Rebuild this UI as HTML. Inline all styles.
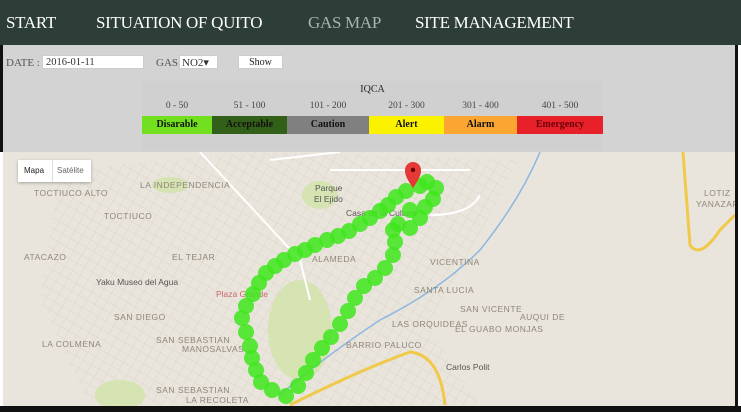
<!DOCTYPE html>
<html><head><meta charset="utf-8"><style>
*{margin:0;padding:0;box-sizing:border-box}
body{width:741px;height:412px;overflow:hidden;background:#fff;font-family:"Liberation Serif",serif;position:relative}
.nav{position:absolute;left:0;top:0;width:741px;height:45px;background:#2d3d38;color:#fff;font-size:17px}
.nav span{position:absolute;top:13px;letter-spacing:-0.3px}
.gray{position:absolute;left:0;top:45px;width:738px;height:107px;background:#d3d3d3;border-left:3px solid #111;border-right:3px solid #111}
.f{position:absolute;font-size:11px;color:#555;top:57px}
.in{position:absolute;background:#fff;height:14px;top:55px;font-size:10.5px;color:#333;padding:1px 3px;border:1px solid #ccc}
.tbl{position:absolute;left:142px;top:81px;width:461px;height:70px;background:#d0d0d0}
.cell{position:absolute;top:35px;height:18px;text-align:center;font-size:10px;font-weight:bold;line-height:18px;color:#111}
.num{position:absolute;top:20px;text-align:center;font-size:9.5px;color:#444}
.map{position:absolute;left:3px;top:152px;width:732px;height:254px;background:#e9e5dc;overflow:hidden}
.bot{position:absolute;left:0;top:406px;width:741px;height:6px;background:#111}
.rb{position:absolute;left:735px;top:45px;width:3px;height:367px;background:#111}
</style></head><body>
<div class="nav">
<span style="left:6px">START</span>
<span style="left:96px">SITUATION OF QUITO</span>
<span style="left:308px;color:#a9b2ae">GAS MAP</span>
<span style="left:415px">SITE MANAGEMENT</span>
</div>
<div class="gray"></div>
<div class="f" style="left:6px">DATE :</div>
<div class="in" style="left:42px;width:102px">2016-01-11</div>
<div class="f" style="left:156px">GAS:</div>
<div class="in" style="left:179px;width:39px;font-size:11px;padding:0 2px">NO2▾</div>
<div class="in" style="left:238px;width:45px;text-align:center;font-size:10px;color:#222">Show</div>
<div class="tbl">
<div style="position:absolute;left:0;top:3px;width:461px;text-align:center;font-size:10px;color:#222">IQCA</div>
<div class="num" style="left:0;width:70px">0 - 50</div>
<div class="num" style="left:70px;width:75px">51 - 100</div>
<div class="num" style="left:145px;width:82px">101 - 200</div>
<div class="num" style="left:227px;width:75px">201 - 300</div>
<div class="num" style="left:302px;width:73px">301 - 400</div>
<div class="num" style="left:375px;width:86px">401 - 500</div>
<div class="cell" style="left:0;width:70px;background:#72e01e">Disarable</div>
<div class="cell" style="left:70px;width:75px;background:#336018">Acceptable</div>
<div class="cell" style="left:145px;width:82px;background:#808080">Caution</div>
<div class="cell" style="left:227px;width:75px;background:#fbf200">Alert</div>
<div class="cell" style="left:302px;width:73px;background:#fca632">Alarm</div>
<div class="cell" style="left:375px;width:86px;background:#e8202a;color:#6a0008">Emergency</div>
</div>
<div class="map">
<svg width="732" height="254" viewBox="3 152 732 254" style="position:absolute;left:0;top:0;font-family:'Liberation Sans',sans-serif">
<defs><pattern id="g" width="9" height="9" patternUnits="userSpaceOnUse" patternTransform="rotate(30)"><path d="M0 0H9M0 0V9" stroke="#d8d2c6" stroke-width="1"/></pattern></defs>
<path d="M60 170 L260 152 L520 160 L470 250 L430 330 L480 405 L90 405 L40 300Z" fill="url(#g)" opacity=".8"/>
<g fill="#cfe3a8" opacity=".8">
<ellipse cx="320" cy="195" rx="18" ry="14"/><ellipse cx="300" cy="330" rx="32" ry="50"/><ellipse cx="170" cy="185" rx="18" ry="8"/><ellipse cx="120" cy="395" rx="25" ry="15"/>
</g>
<g stroke="#fff" stroke-width="2" fill="none">
<path d="M200 152 L300 260 L310 300"/><path d="M330 170 L470 170"/><path d="M430 215 Q470 215 480 195"/><path d="M270 160 L340 152"/>
</g>
<path d="M540 152 Q520 200 480 250 Q440 290 380 320 Q320 360 280 395" stroke="#8cb8e0" stroke-width="1.5" fill="none"/>
<path d="M683 152 L690 245 Q700 260 720 230 L735 215" stroke="#f1c94a" stroke-width="3" fill="none"/>
<path d="M290 405 Q360 370 410 352 Q440 355 445 405" stroke="#f1c94a" stroke-width="3" fill="none"/>
<g font-size="8.5" fill="#8e867a" letter-spacing=".5">
<text x="140" y="188">LA INDEPENDENCIA</text><text x="34" y="196">TOCTIUCO ALTO</text><text x="104" y="219">TOCTIUCO</text>
<text x="24" y="260">ATACAZO</text><text x="172" y="260">EL TEJAR</text><text x="114" y="320">SAN DIEGO</text>
<text x="156" y="343">SAN SEBASTIAN</text><text x="182" y="352">MANOSALVAS</text><text x="42" y="347">LA COLMENA</text>
<text x="156" y="393">SAN SEBASTIAN</text><text x="186" y="403">LA RECOLETA</text><text x="430" y="265">VICENTINA</text>
<text x="414" y="293">SANTA LUCIA</text><text x="460" y="312">SAN VICENTE</text><text x="392" y="327">LAS ORQUIDEAS</text>
<text x="455" y="332">EL GUABO MONJAS</text><text x="520" y="320">AUQUI DE</text><text x="346" y="348">BARRIO PALUCO</text>
<text x="312" y="262">ALAMEDA</text><text x="704" y="196">LOTIZ</text><text x="696" y="207">YANAZAR</text>
</g>
<g font-size="8.5" fill="#555">
<text x="96" y="285">Yaku Museo del Agua</text><text x="216" y="297" fill="#c66">Plaza Grande</text>
<text x="315" y="191">Parque</text><text x="314" y="202">El Ejido</text><text x="346" y="216">Casa de la Cultura</text>
<text x="446" y="370">Carlos Polit</text>
</g>
<g fill="#3ee61c" fill-opacity=".85">
<circle cx="427" cy="182" r="8"/><circle cx="436" cy="188" r="8"/><circle cx="420" cy="186" r="8"/><circle cx="406" cy="191" r="8"/><circle cx="396" cy="197" r="8"/><circle cx="388" cy="205" r="8"/><circle cx="380" cy="211" r="8"/><circle cx="370" cy="218" r="8"/><circle cx="360" cy="224" r="8"/><circle cx="349" cy="231" r="8"/><circle cx="338" cy="236" r="8"/><circle cx="327" cy="240" r="8"/><circle cx="315" cy="245" r="8"/><circle cx="305" cy="250" r="8"/><circle cx="295" cy="254" r="8"/><circle cx="284" cy="260" r="8"/><circle cx="275" cy="266" r="8"/><circle cx="266" cy="273" r="8"/><circle cx="259" cy="283" r="8"/><circle cx="253" cy="294" r="8"/><circle cx="246" cy="306" r="8"/><circle cx="242" cy="318" r="8"/><circle cx="246" cy="332" r="8"/><circle cx="250" cy="346" r="8"/><circle cx="252" cy="358" r="8"/><circle cx="256" cy="370" r="8"/><circle cx="261" cy="382" r="8"/><circle cx="272" cy="390" r="8"/><circle cx="286" cy="396" r="8"/><circle cx="298" cy="386" r="8"/><circle cx="306" cy="373" r="8"/><circle cx="313" cy="360" r="8"/><circle cx="322" cy="348" r="8"/><circle cx="331" cy="337" r="8"/><circle cx="340" cy="324" r="8"/><circle cx="348" cy="311" r="8"/><circle cx="355" cy="298" r="8"/><circle cx="364" cy="286" r="8"/><circle cx="375" cy="278" r="8"/><circle cx="385" cy="268" r="8"/><circle cx="393" cy="255" r="8"/><circle cx="395" cy="242" r="8"/><circle cx="393" cy="230" r="8"/><circle cx="398" cy="224" r="8"/><circle cx="410" cy="228" r="8"/><circle cx="420" cy="218" r="8"/><circle cx="425" cy="207" r="8"/><circle cx="433" cy="199" r="8"/><circle cx="410" cy="210" r="8"/>
</g>
<path d="M413 188 C406 178 405 174 405 170 A8 8 0 0 1 421 170 C421 174 420 178 413 188Z" fill="#e53935"/>
<circle cx="413" cy="170" r="2.2" fill="#600"/>
</svg>
<div style="position:absolute;left:15px;top:8px;width:73px;height:22px;background:#fff;box-shadow:0 1px 3px rgba(0,0,0,.3);font-family:'Liberation Sans',sans-serif;font-size:8px;line-height:22px">
<span style="position:absolute;left:6px;color:#222">Mapa</span><span style="position:absolute;left:34px;color:#666;border-left:1px solid #ddd;padding-left:4px">Satélite</span></div>
</div>
<div class="rb"></div>
<div class="bot"></div>
</body></html>
